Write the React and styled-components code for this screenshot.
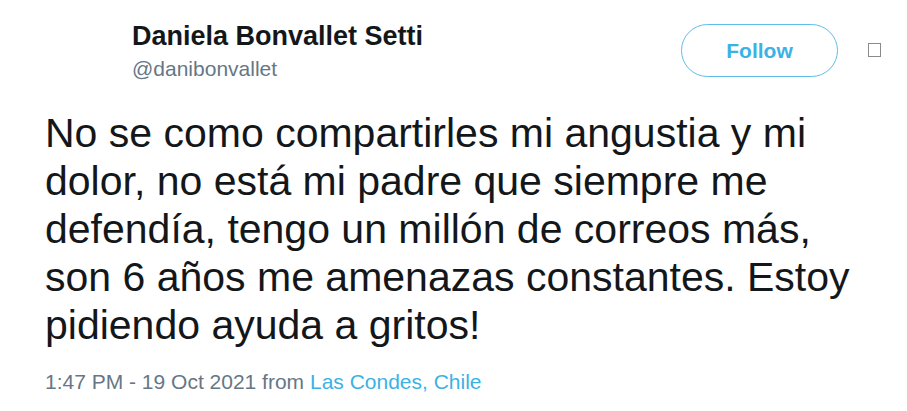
import React from 'react';
import styled, { createGlobalStyle } from 'styled-components';

const GlobalStyle = createGlobalStyle`
  body {
    margin: 0;
    background: #ffffff;
    font-family: "Liberation Sans", Arial, sans-serif;
  }
`;

const Tweet = styled.article`
  width: 907px;
  height: 411px;
  box-sizing: border-box;
  padding: 20px 26px 0 45px;
  color: #14171a;
`;

const Header = styled.header`
  display: flex;
  align-items: flex-start;
`;

const Author = styled.div`
  flex: 1;
  padding-left: 87px;
  padding-top: 1px;
`;

const Name = styled.div`
  font-size: 27px;
  font-weight: bold;
  line-height: 30px;
`;

const Handle = styled.div`
  font-size: 21px;
  line-height: 24px;
  color: #657786;
  margin-top: 6px;
`;

const FollowButton = styled.button`
  margin-top: 4px;
  width: 157px;
  height: 53px;
  border-radius: 27px;
  border: 1px solid #5ebde6;
  background: #ffffff;
  color: #3cb2e4;
  font-family: inherit;
  font-size: 21px;
  font-weight: bold;
`;

const Caret = styled.span`
  display: block;
  margin: 23px 0 0 30px;
  width: 11px;
  height: 12px;
  border: 1px solid #8a8a8a;
`;

const Body = styled.p`
  margin: 28px 0 0;
  font-size: 41px;
  line-height: 48px;
  white-space: nowrap;
`;

const Meta = styled.div`
  margin-top: 21px;
  font-size: 21px;
  line-height: 24px;
  color: #657786;
`;

const Place = styled.a`
  color: #3cb2e4;
  text-decoration: none;
`;

const lines = [
  'No se como compartirles mi angustia y mi',
  'dolor, no está mi padre que siempre me',
  'defendía, tengo un millón de correos más,',
  'son 6 años me amenazas constantes. Estoy',
  'pidiendo ayuda a gritos!',
];

export default function App() {
  return (
    <>
      <GlobalStyle />
      <Tweet>
        <Header>
          <Author>
            <Name>Daniela Bonvallet Setti</Name>
            <Handle>@danibonvallet</Handle>
          </Author>
          <FollowButton>Follow</FollowButton>
          <Caret />
        </Header>
        <Body>
          {lines.map((line, i) => (
            <React.Fragment key={i}>
              {line}
              {i < lines.length - 1 && <br />}
            </React.Fragment>
          ))}
        </Body>
        <Meta>
          1:47 PM - 19 Oct 2021 from <Place>Las Condes, Chile</Place>
        </Meta>
      </Tweet>
    </>
  );
}
